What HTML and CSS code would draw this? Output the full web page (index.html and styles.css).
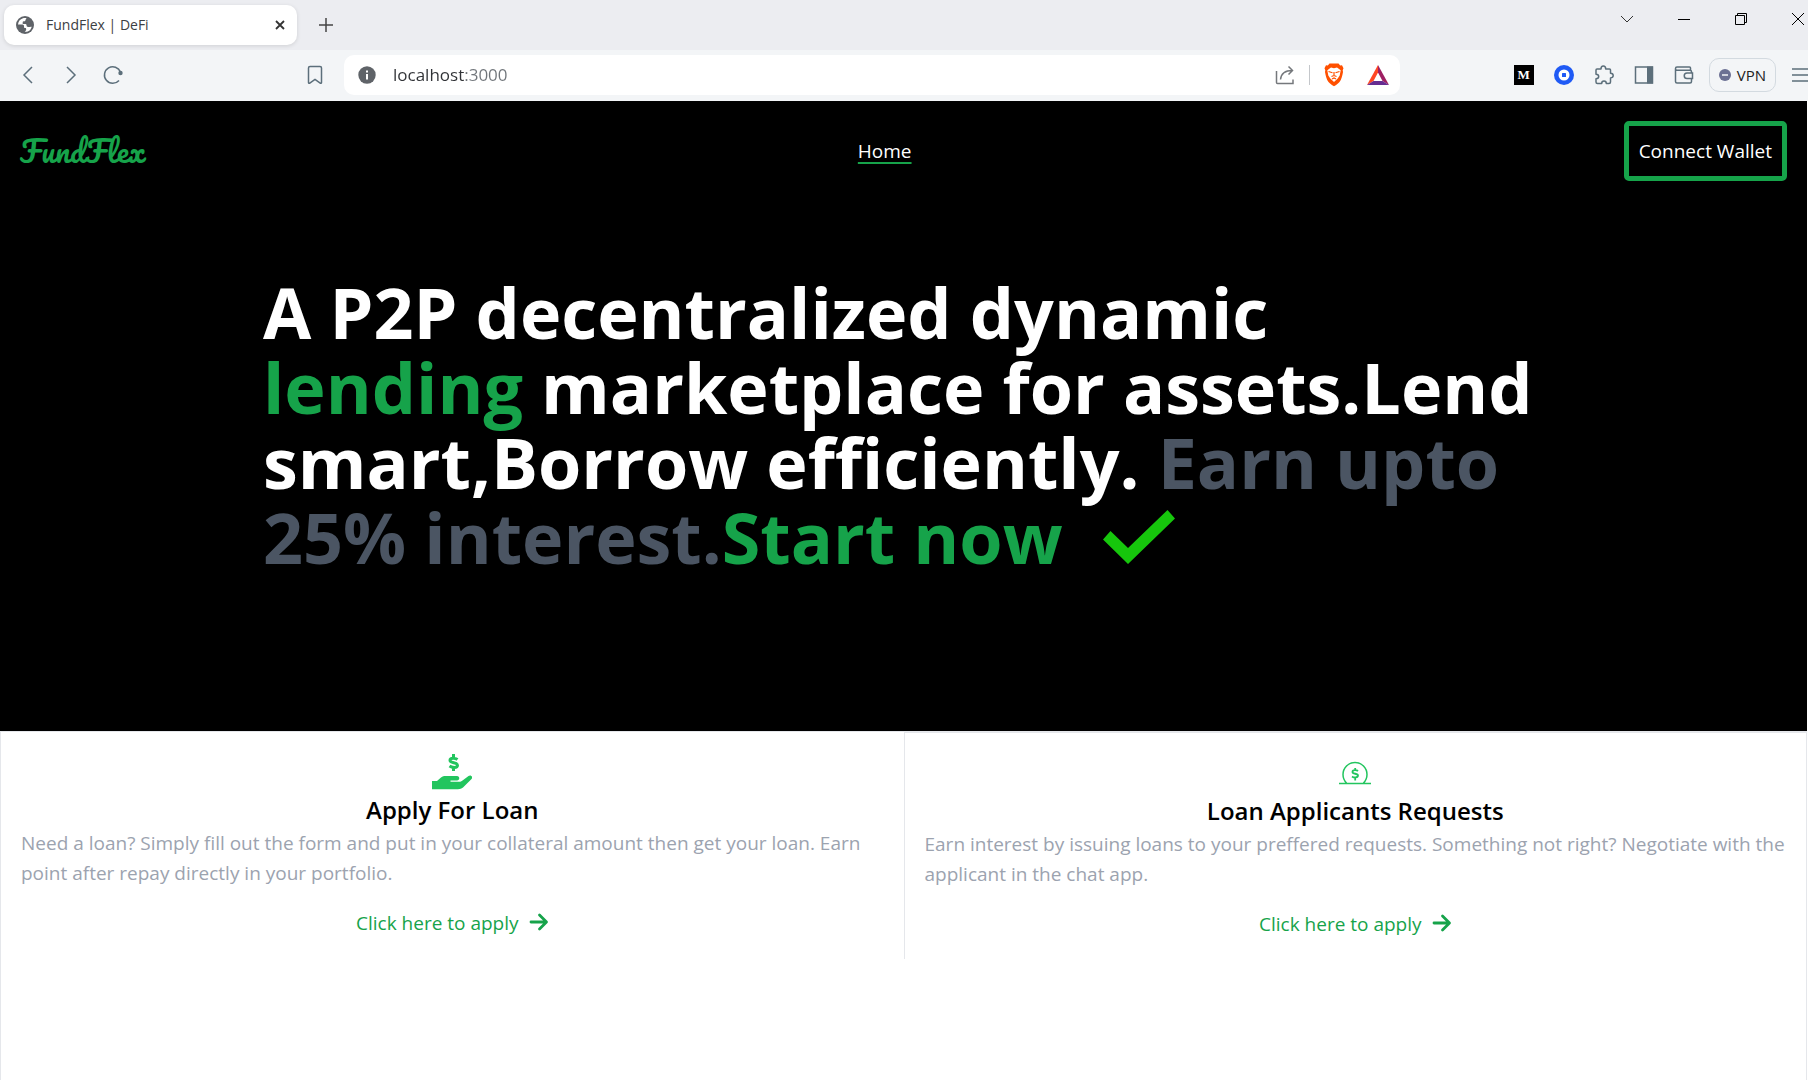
FILE: index.html
```html
<!DOCTYPE html>
<html lang="en">
<head>
<meta charset="utf-8">
<title>FundFlex | DeFi</title>
<link rel="stylesheet" href="styles.css">
</head>
<body>
<div class="browser">
  <header class="tabstrip">
    <div class="tab">
      <svg class="icon-18" viewBox="0 0 18 18"><circle cx="9" cy="9" r="9" fill="#5f6368"/><path d="M7 2.2C4 3 2.2 5.600 2 8.500h4.500c1 0 1.500.800 1.500 1.800v.700c0 .8.500 1 1.300 1 .8 0 .9.700.9 1.500 0 1-.9 1.300-1.500 2.300 3.500.5 6.300-1.800 7-5-1.500-.2-2.200.3-3.500.2-1.300 0-1.700-.9-1.700-2 0-.8-.7-1-1.500-1H6.700V6.300c0-.8.700-1.100 1.600-1.100s1.200-.7 1.300-1.500c.1-.7.500-1.100 1-1.500C9.300 1.800 8 1.900 7 2.200z" fill="#fff"/></svg>
      <span class="tab-title">FundFlex | DeFi</span>
      <button class="bare" aria-label="Close tab"><svg class="icon-10" viewBox="0 0 10 10"><path d="M1 1l8 8M9 1L1 9" stroke="#333" stroke-width="1.800" fill="none"/></svg></button>
    </div>
    <button class="bare new-tab" aria-label="New tab"><svg class="icon-16" viewBox="0 0 16 16"><path d="M8 1v14M1 8h14" stroke="#444" stroke-width="1.500"/></svg></button>
    <div class="window-controls">
      <button class="bare" aria-label="Search tabs"><svg class="icon-14" viewBox="0 0 14 14"><path d="M1 4l6 6 6-6" stroke="#333" fill="none"/></svg></button>
      <button class="bare" aria-label="Minimize"><svg class="icon-14" viewBox="0 0 14 14"><path d="M1 7.500h12" stroke="#000"/></svg></button>
      <button class="bare" aria-label="Restore"><svg class="icon-14" viewBox="0 0 14 14"><path d="M1.500 3.500h9v9h-9zM3.500 3.500v-2h9v9h-2" stroke="#000" fill="none"/></svg></button>
      <button class="bare" aria-label="Close"><svg class="icon-14" viewBox="0 0 14 14"><path d="M1 1l12 12M13 1L1 13" stroke="#000"/></svg></button>
    </div>
  </header>
  <div class="toolbar">
    <div class="nav-buttons">
      <button class="bare" aria-label="Back"><svg class="icon-20" viewBox="0 0 20 20"><path d="M13 2L5 10l8 8" class="line"/></svg></button>
      <button class="bare" aria-label="Forward"><svg class="icon-20" viewBox="0 0 20 20"><path d="M6 2l8 8-8 8" class="line"/></svg></button>
      <button class="bare" aria-label="Reload"><svg class="icon-20" viewBox="0 0 20 20"><path d="M16 15.500A8.300 8.300 0 1 1 17.500 7" class="line"/><circle cx="17.500" cy="8" r="2.200" fill="#5c6f7b"/></svg></button>
    </div>
    <button class="bare" aria-label="Bookmark"><svg class="icon-20" viewBox="0 0 20 20"><path d="M3.500 3a1.500 1.500 0 0 1 1.500-1.500h10A1.500 1.500 0 0 1 16.500 3v14.500c0 .8-.8 1-1.300.6L10 14.500l-5.200 3.600c-.5.400-1.300.2-1.300-.6z" class="line"/></svg></button>
    <div class="address">
      <svg class="icon-18" viewBox="0 0 18 18"><circle cx="9" cy="9" r="8.700" fill="#5f6368"/><path d="M8 8h2v5.500H8zM8 4.500h2v2H8z" fill="#fff"/></svg>
      <input class="url" type="text" aria-label="Address" value="localhost:3000">
      <button class="bare" aria-label="Share"><svg class="icon-20" viewBox="0 0 20 20"><path d="M1.500 6v11.500a1 1 0 0 0 1 1H18v-4M5.500 14.500C6 9 10 5.500 17.500 5.500M13.500 1.500l4 4-4 4" fill="none" stroke="#75787c" stroke-width="1.500"/></svg></button>
      <span class="divider"></span>
      <button class="bare" aria-label="Brave Shields"><svg class="shield" viewBox="0 0 20 24"><path d="M5.500.5h9l1.700 2 1.800-.2 1.500 3-.8 2L19 9c-.8 4-1.500 7.500-3.500 10-1.500 1.800-4 3.300-5.500 4.300C8.500 22.300 6 20.800 4.500 19 2.500 16.500 1.800 13 1 9l.3-1.700-.8-2 1.500-3 1.800.2z" fill="#ff5000"/><path d="M7 4.500l3 .7 3-.7 3.700 2.700-1 5.300-2 3-3.700 3.500-3.700-3.500-2-3-1-5.300z" fill="#fff"/><path d="M4.500 8.500l4 1.200M15.500 8.500l-4 1.200M10 9v3.500M7.500 13.500l2.500-1 2.500 1M8 16l2-1 2 1" stroke="#ff5000" stroke-width="1.200" fill="none"/></svg></button>
      <button class="bare" aria-label="Rewards"><svg class="rewards" viewBox="0 0 22 20"><path d="M11 0L0 20l6.500-4L11 7.500z" fill="#ff4724"/><path d="M11 0l11 20-6.500-4L11 7.500z" fill="#9e1f63"/><path d="M0 20h22l-6.500-4h-9z" fill="#662d91"/></svg></button>
    </div>
    <div class="extensions">
      <button class="bare" aria-label="Medium"><span class="medium">M</span></button>
      <button class="bare" aria-label="Wallet extension"><svg class="icon-20" viewBox="0 0 20 20"><circle cx="10" cy="10" r="10" fill="#1f5af5"/><circle cx="10" cy="10" r="5.500" fill="#fff"/><rect x="8" y="8" width="4" height="4" rx=".5" fill="#1f5af5"/></svg></button>
      <button class="bare" aria-label="Extensions"><svg class="icon-20" viewBox="0 0 20 20"><path d="M3 4h4c0-2 .8-3 2.300-3s2.400 1 2.400 3h3.800a1 1 0 0 1 1 1v3.300c1.700 0 2.700.8 2.700 2.300s-1 2.300-2.700 2.300V17a1.500 1.500 0 0 1-1.500 1.500h-2.700c0-1.700-.9-2.500-2.300-2.500s-2.300.8-2.300 2.500H3.500A1.500 1.500 0 0 1 2 17v-3.200c1.800 0 2.700-.8 2.700-2.200S3.800 9.300 2 9.300V5a1 1 0 0 1 1-1z" class="line" stroke-linejoin="round"/></svg></button>
      <button class="bare" aria-label="Sidebar"><svg class="icon-20" viewBox="0 0 20 20"><path d="M1.500 2h17v16h-17z" class="line"/><path d="M13 1.500h6v17h-6z" fill="#5c6f7b"/></svg></button>
      <button class="bare" aria-label="Wallet"><svg class="icon-20" viewBox="0 0 20 20"><path d="M16.500 5V3a1 1 0 0 0-1-1H3a1.500 1.500 0 0 0-1.500 1.500V16.500A1.500 1.500 0 0 0 3 18h13a1.500 1.500 0 0 0 1.500-1.500V14M1.500 3.500A1.500 1.500 0 0 0 3 5.200h13a1.500 1.500 0 0 1 1.500 1.500V8M18.500 8v5.500h-5.500a2.700 2.700 0 0 1 0-5.500z" class="line"/></svg></button>
      <button class="vpn"><svg class="icon-12" viewBox="0 0 12 12"><circle cx="6" cy="6" r="6" fill="#6b7093"/><path d="M3 6h6" stroke="#f3f5f7" stroke-width="1.500"/></svg>VPN</button>
      <button class="bare menu" aria-label="Menu"><svg class="icon-20" viewBox="0 0 20 20"><path d="M4 4h16M4 10h16M4 16h16" class="line"/></svg></button>
    </div>
  </div>
</div>
<div class="page">
  <section class="hero">
    <nav class="site-nav">
      <a class="logo" href="#">FundFlex</a>
      <a class="home" href="#">Home</a>
      <button class="connect">Connect Wallet</button>
    </nav>
    <h1 class="headline">A P2P decentralized dynamic <span class="green">lending</span> marketplace for assets.Lend smart,Borrow efficiently. <span class="slate">Earn upto 25% interest.</span><span class="green">Start now</span> <svg class="check" viewBox="0 0 72 54"><path d="M7.500 21L0 29.500 25 54 72 8.500 64.500 0 25 38z" fill="#16c60c"/></svg></h1>
  </section>
  <main class="cards">
    <article class="card">
      <svg class="card-icon" viewBox="0 0 40 40"><path d="M0 29h5l4-3.500c1.500-1.200 3-1.500 4.500-1.500H25c3 0 3 4.500 0 4.500h-6.500v1.300H27c1.500 0 2.500-.5 3.500-1.300l6-4.500c2.300-1.700 5 1 2.800 3.300L31 35.500c-1.500 1.200-3 1.700-5 1.700H0z" fill="#22c55e"/><path d="M25.500 7.500c-2-1.500-7.500-2-7.500.8 0 3.500 7.500 1.500 7.500 5 0 3-5.500 2.500-8 .8M21.500 2v3.500M21.500 15.500V19" stroke="#22c55e" stroke-width="3" fill="none"/></svg>
      <h2 class="card-title">Apply For Loan</h2>
      <p class="card-text">Need a loan? Simply fill out the form and put in your collateral amount then get your loan. Earn point after repay directly in your portfolio.</p>
      <a class="apply" href="#">Click here to apply <svg class="icon-20" viewBox="0 0 20 20"><path d="M2 9h15M10.500 2l7 7-7 7" stroke="#16a34a" stroke-width="2.800" fill="none" stroke-linejoin="round" stroke-linecap="round"/></svg></a>
    </article>
    <article class="card card-alt">
      <svg class="card-icon" viewBox="0 0 40 40"><path d="M4 30.500h32M11.500 30a12 12 0 1 1 17 0" stroke="#22c55e" stroke-width="1.500" fill="none"/><path d="M23 18c-1.500-1.300-5.500-1.300-5.500.9 0 2.500 5.500 1.200 5.500 3.700 0 2.300-4 2.200-6 .8M20.200 15v2M20.200 25v2.500" stroke="#22c55e" stroke-width="1.800" fill="none"/></svg>
      <h2 class="card-title">Loan Applicants Requests</h2>
      <p class="card-text">Earn interest by issuing loans to your preffered requests. Something not right? Negotiate with the applicant in the chat app.</p>
      <a class="apply" href="#">Click here to apply <svg class="icon-20" viewBox="0 0 20 20"><path d="M2 9h15M10.500 2l7 7-7 7" stroke="#16a34a" stroke-width="2.800" fill="none" stroke-linejoin="round" stroke-linecap="round"/></svg></a>
    </article>
  </main>
</div>
</body>
</html>
```
FILE: styles.css
```css
*, *::before, *::after { box-sizing: border-box; }

body {
  margin: 0;
  min-height: 100vh;
  display: flex;
  flex-direction: column;
  font-family: "Segoe UI", "Open Sans", "Noto Sans", sans-serif;
  color: #000;
  background: #fff;
  overflow-x: hidden;
}

svg { display: block; flex: none; }
button { font: inherit; color: inherit; cursor: pointer; }
.bare { display: flex; padding: 0; border: 0; background: none; }
.line { fill: none; stroke: #5c6f7b; stroke-width: 1.5; }
.icon-10 { width: 10px; height: 10px; }
.icon-12 { width: 12px; height: 12px; }
.icon-14 { width: 14px; height: 14px; }
.icon-16 { width: 16px; height: 16px; }
.icon-18 { width: 18px; height: 18px; }
.icon-20 { width: 20px; height: 20px; }

/* Browser chrome */
.tabstrip {
  display: flex;
  align-items: center;
  height: 50px;
  padding-left: 4px;
  background: #ecedf1;
}
.tab {
  display: flex;
  align-items: center;
  gap: 12px;
  width: 293px;
  height: 40px;
  padding: 0 12px;
  border-radius: 10px;
  background: #fff;
  box-shadow: 0 1px 4px rgba(0, 0, 0, 0.12);
}
.tab-title { flex: 1; font-size: 14px; line-height: 20px; color: #3c4043; }
.new-tab { margin-left: 21px; }
.window-controls {
  display: flex;
  gap: 43px;
  margin-left: auto;
  margin-right: 3px;
  padding-bottom: 13px;
}
.toolbar {
  display: flex;
  align-items: center;
  height: 51px;
  padding: 0 0 2px 19px;
  background: #f3f5f7;
}
.nav-buttons { display: flex; gap: 22px; margin-right: 182px; }
.address {
  display: flex;
  align-items: center;
  flex: 0 1 1056px;
  height: 40px;
  margin-left: 19px;
  padding: 0 11px 0 14px;
  border-radius: 10px;
  background: #fff;
}
.url {
  flex: 1;
  min-width: 0;
  margin-left: 17px;
  padding: 0;
  border: 0;
  font: inherit;
  font-size: 17px;
  line-height: 24px;
  color: transparent;
  background: linear-gradient(90deg, #303236 72px, #70757a 72px);
  background-clip: text;
  caret-color: #303236;
}
.divider { width: 1px; height: 20px; margin: 0 14px; background: #c4c7cb; }
.shield { width: 20px; height: 24px; }
.rewards { width: 22px; height: 20px; margin-left: 23px; }
.extensions { display: flex; align-items: center; gap: 20px; margin-left: auto; }
.medium {
  width: 20px;
  height: 20px;
  background: #000;
  color: #fff;
  font: bold 13px/20px "Liberation Serif", serif;
  text-align: center;
}
.vpn {
  display: flex;
  align-items: center;
  gap: 6px;
  height: 34px;
  margin: 0 -8px 0 -5px;
  padding: 0 9px;
  border: 1px solid #d3dae0;
  border-radius: 10px;
  background: none;
  font-size: 15px;
  color: #222;
}

/* Site */
.page {
  flex: 1;
  display: flex;
  flex-direction: column;
  margin-right: 1px;
}
.hero { padding: 20px 20px 156px; background: #000; color: #fff; }
.site-nav {
  display: flex;
  justify-content: space-between;
  align-items: center;
  font-size: 19px;
  line-height: 30px;
}
.logo {
  font: 30px/40px "Pacifico", cursive;
  color: #16a34a;
  text-decoration: none;
}
.home {
  color: #fff;
  text-decoration: underline #16a34a 2px;
  text-underline-offset: 4px;
}
.connect {
  height: 60px;
  padding: 0 10px;
  border: 5px solid #16a34a;
  border-radius: 5px;
  background: none;
  white-space: nowrap;
}
.headline {
  width: 1281px;
  max-width: 100%;
  margin: 94px auto 0;
  font-size: 70px;
  line-height: 75px;
  font-weight: 700;
}
.green { color: #16a34a; }
.slate { color: #4b5563; }
.check { display: inline-block; width: 72px; height: 54px; margin-left: 22px; }

.cards {
  flex: 1;
  display: grid;
  grid-template-columns: 1fr 1fr;
  align-items: start;
  border: 1px solid #e5e7eb;
  border-bottom: 0;
}
.card {
  display: flex;
  flex-direction: column;
  align-items: center;
  padding: 20px;
}
.card-alt { border: solid #e5e7eb; border-width: 1px 0 0 1px; }
.card-icon { width: 40px; height: 40px; }
.card-title { margin: 0; font-size: 24px; line-height: 36px; font-weight: 600; }
.card-text { align-self: stretch; margin: 0; font-size: 19px; line-height: 30px; color: #9ca3af; }
.apply {
  display: flex;
  align-items: center;
  gap: 10px;
  margin-top: 20px;
  font-size: 19px;
  line-height: 30px;
  color: #16a34a;
  text-decoration: none;
}
```
